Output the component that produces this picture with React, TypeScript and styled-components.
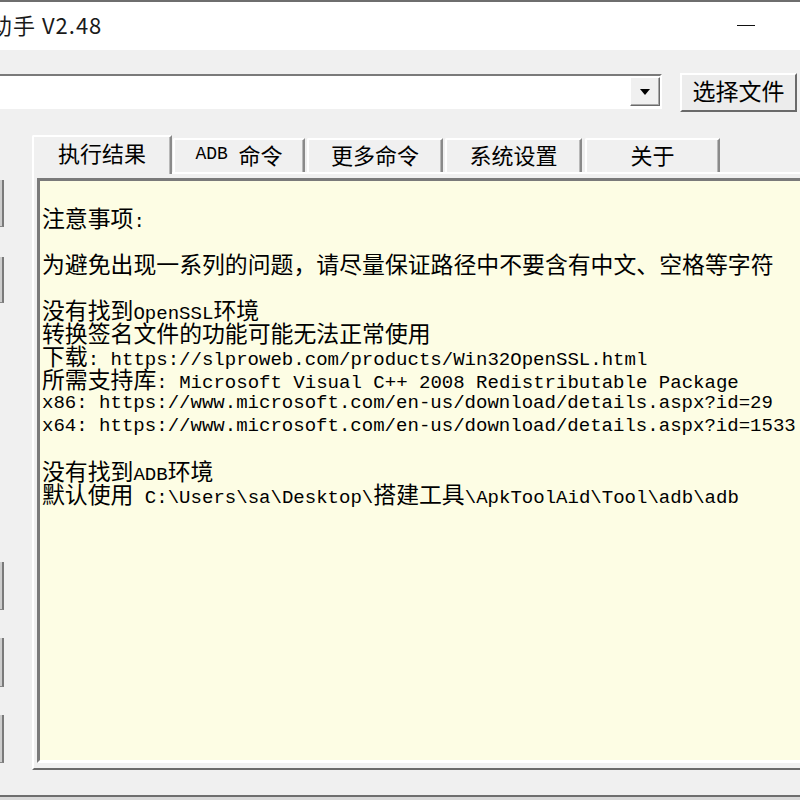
import React from "react";
import styled, { createGlobalStyle } from "styled-components";

const Global = createGlobalStyle`
  html, body { margin: 0; padding: 0; background: #d9d9d9; }
  body { width: 800px; height: 800px; overflow: hidden; font-family: "Noto Sans CJK SC", sans-serif; }
  #root { width: 800px; height: 800px; overflow: hidden; }
`;

const Window = styled.div`
  width: 800px;
  height: 797px;
  box-sizing: border-box;
  border-top: 2px solid #6e6e6e;
  border-bottom: 2px solid #6e6e6e;
  background: #f0f0f0;
  display: flex;
  flex-direction: column;
  overflow: hidden;
`;

const TitleBar = styled.div`
  height: 48px;
  flex: none;
  background: #ffffff;
  display: flex;
  align-items: center;
`;

const Title = styled.div`
  flex: 1;
  margin-left: -10px;
  padding-bottom: 5px;
  font-family: "Noto Sans CJK SC", "Liberation Sans", sans-serif;
  font-size: 22px;
  color: #1a1a1a;
  white-space: nowrap;
  letter-spacing: 1px;
`;

const Minimize = styled.span`
  width: 18px;
  height: 1px;
  background: #111;
  margin-right: 45px;
  margin-bottom: 2px;
`;

const Body = styled.div`
  flex: 1;
  min-height: 0;
  display: flex;
  flex-direction: column;
`;

const Toolbar = styled.div`
  flex: none;
  margin-top: 23px;
  height: 39px;
  display: flex;
  align-items: flex-start;
  gap: 18px;
`;

const Combo = styled.div`
  margin-top: 1px;
  margin-left: -4px;
  width: 666px;
  height: 35px;
  box-sizing: border-box;
  border-top: 2px solid #7a7a7a;
  border-left: 2px solid #7a7a7a;
  border-bottom: 2px solid #ffffff;
  border-right: 2px solid #ffffff;
  background: #ffffff;
  display: flex;
  justify-content: flex-end;
  align-items: center;
`;

const DropButton = styled.div`
  width: 30px;
  height: 29px;
  box-sizing: border-box;
  background: #f0f0f0;
  border: 1px solid;
  border-color: #ffffff #6a6a6a #6a6a6a #ffffff;
  box-shadow: inset -1px -1px 0 #a8a8a8;
  display: flex;
  align-items: center;
  justify-content: center;
`;

const SelectButton = styled.div`
  flex: none;
  width: 117px;
  height: 39px;
  box-sizing: border-box;
  background: #ececec;
  border: 2px solid;
  border-color: #ffffff #6a6a6a #6a6a6a #ffffff;
  padding-bottom: 5px;
  display: flex;
  align-items: center;
  justify-content: center;
  font-family: "Noto Sans CJK SC", sans-serif;
  font-size: 23px;
  color: #000;
`;

const Main = styled.div`
  flex: none;
  margin-top: 23px;
  height: 635px;
  display: flex;
`;

const LeftStrip = styled.div`
  flex: none;
  width: 4px;
  display: flex;
  flex-direction: column;
`;

const StripButton = styled.div<{ $top: number; $h: number }>`
  margin-top: ${(p) => p.$top}px;
  height: ${(p) => p.$h}px;
  width: 4px;
  box-sizing: border-box;
  background: #cdcdcd;
  border-right: 2px solid #7a7a7a;
  border-bottom: 1px solid #8a8a8a;
`;

const TabControl = styled.div`
  flex: none;
  margin-left: 28px;
  width: 800px;
  display: flex;
  flex-direction: column;
`;

const TabStrip = styled.div`
  flex: none;
  height: 37px;
  display: flex;
  align-items: flex-start;
  position: relative;
  z-index: 1;
`;

const Tab = styled.div<{ $w: number; $gap: number; $selected?: boolean }>`
  flex: none;
  width: ${(p) => p.$w}px;
  margin-left: ${(p) => p.$gap}px;
  margin-top: ${(p) => (p.$selected ? 0 : 3)}px;
  height: ${(p) => (p.$selected ? 39 : 34)}px;
  box-sizing: border-box;
  background: #f0f0f0;
  border-top: 2px solid #ffffff;
  border-left: 2px solid #ffffff;
  border-right: 2px solid #8a8a8a;
  box-shadow: inset -1px 0 0 #b8b8b8;
  border-top-left-radius: 2px;
  display: flex;
  align-items: center;
  justify-content: center;
  padding-bottom: ${(p) => (p.$selected ? 7 : 4)}px;
  color: #000;
  white-space: pre;
`;

const TabPage = styled.div`
  flex: 1;
  min-height: 0;
  box-sizing: border-box;
  border-top: 2px solid #ffffff;
  border-left: 2px solid #ffffff;
  border-bottom: 2px solid #6a6a6a;
  padding: 4px 0 5px 3px;
  display: flex;
  flex-direction: column;
`;

const TextBox = styled.div`
  flex: 1;
  min-height: 0;
  box-sizing: border-box;
  background: #fdfde4;
  border-top: 3px solid #7a7a7a;
  border-left: 3px solid #7a7a7a;
  border-bottom: 3px solid #ffffff;
  padding: 2px 0 0 2px;
  overflow: hidden;
  color: #000;
`;

const Line = styled.div`
  height: 23px;
  line-height: 23px;
  white-space: pre;
`;

const Han = styled.span<{ $size: number }>`
  font-family: "Noto Sans CJK SC", sans-serif;
  font-size: ${(p) => p.$size}px;
  line-height: 23px;
`;

const Latin = styled.span<{ $size: number }>`
  font-family: "Liberation Mono", monospace;
  font-size: ${(p) => p.$size}px;
  line-height: 23px;
`;

const CJK_RE = /([\u2E80-\u9FFF\u3000-\u303F\uFF00-\uFFEF]+)/;

function Mixed({ text, han, latin }: { text: string; han: number; latin: number }) {
  const parts = text.split(CJK_RE).filter((p) => p.length > 0);
  return (
    <>
      {parts.map((p, i) =>
        CJK_RE.test(p) ? (
          <Han key={i} $size={han}>
            {p}
          </Han>
        ) : (
          <Latin key={i} $size={latin}>
            {p}
          </Latin>
        )
      )}
    </>
  );
}

const tabs = [
  { label: "执行结果", w: 140, gap: 0, selected: true },
  { label: "ADB 命令", w: 132, gap: 1 },
  { label: "更多命令", w: 136, gap: 2 },
  { label: "系统设置", w: 137, gap: 2 },
  { label: "关于", w: 135, gap: 3 },
];

const stripButtons = [
  { top: 45, h: 47 },
  { top: 30, h: 46 },
  { top: 259, h: 48 },
  { top: 28, h: 49 },
  { top: 28, h: 48 },
];

const lines = [
  "",
  "注意事项:",
  "",
  "为避免出现一系列的问题，请尽量保证路径中不要含有中文、空格等字符",
  "",
  "没有找到OpenSSL环境",
  "转换签名文件的功能可能无法正常使用",
  "下载: https://slproweb.com/products/Win32OpenSSL.html",
  "所需支持库: Microsoft Visual C++ 2008 Redistributable Package",
  "x86: https://www.microsoft.com/en-us/download/details.aspx?id=29",
  "x64: https://www.microsoft.com/en-us/download/details.aspx?id=1533",
  "",
  "没有找到ADB环境",
  "默认使用 C:\\Users\\sa\\Desktop\\搭建工具\\ApkToolAid\\Tool\\adb\\adb",
];

export default function App() {
  return (
    <>
      <Global />
      <Window>
        <TitleBar>
          <Title>助手 V2.48</Title>
          <Minimize />
        </TitleBar>
        <Body>
          <Toolbar>
            <Combo>
              <DropButton>
                <svg width="10" height="6" viewBox="0 0 10 6">
                  <polygon points="0,0 10,0 5,6" fill="#000" />
                </svg>
              </DropButton>
            </Combo>
            <SelectButton>选择文件</SelectButton>
          </Toolbar>
          <Main>
            <LeftStrip>
              {stripButtons.map((b, i) => (
                <StripButton key={i} $top={b.top} $h={b.h} />
              ))}
            </LeftStrip>
            <TabControl>
              <TabStrip>
                {tabs.map((t) => (
                  <Tab key={t.label} $w={t.w} $gap={t.gap} $selected={t.selected}>
                    <Mixed text={t.label} han={22} latin={18} />
                  </Tab>
                ))}
              </TabStrip>
              <TabPage>
                <TextBox>
                  {lines.map((l, i) => (
                    <Line key={i}>
                      <Mixed text={l} han={22.86} latin={19.05} />
                    </Line>
                  ))}
                </TextBox>
              </TabPage>
            </TabControl>
          </Main>
        </Body>
      </Window>
    </>
  );
}
